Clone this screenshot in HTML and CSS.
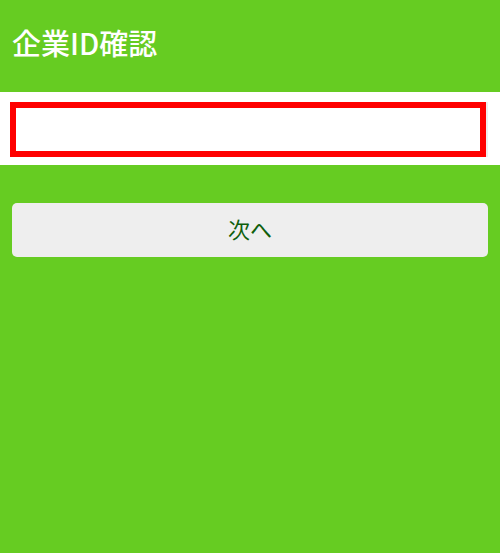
FILE: index.html
```html
<!DOCTYPE html>
<html lang="ja">
<head>
<meta charset="utf-8">
<title>企業ID確認</title>
<link rel="stylesheet" href="styles.css">
</head>
<body>
<header class="header">
  <h1 class="title">企業ID確認</h1>
</header>
<div class="field-band">
  <input class="field" type="text" aria-label="企業ID">
</div>
<div class="actions">
  <button class="next-btn" type="button">次へ</button>
</div>
</body>
</html>
```
FILE: styles.css
```css
html, body {
  margin: 0;
  padding: 0;
  height: 100%;
}
body {
  background: #66cc22;
  font-family: "Noto Sans CJK JP", "Noto Sans", sans-serif;
}
.header {
  height: 92px;
  box-sizing: border-box;
  padding: 0 12px;
  display: flex;
  align-items: center;
}
.title {
  margin: 0;
  color: #ffffff;
  font-size: 29px;
  font-weight: 500;
  line-height: 1;
  letter-spacing: 0;
  position: relative;
  top: -4px;
}
.field-band {
  background: #ffffff;
  height: 73px;
  box-sizing: border-box;
  padding: 10px 14px 0 10px;
}
.field {
  display: block;
  width: 100%;
  height: 55px;
  box-sizing: border-box;
  border: 6px solid #ff0000;
  background: #ffffff;
  margin: 0;
  padding: 0 8px;
  outline: none;
  box-shadow: 2px 0 0 #eeeeee;
  font-size: 18px;
}
.actions {
  padding: 38px 12px 0 12px;
}
.next-btn {
  display: block;
  width: 100%;
  height: 54px;
  border: none;
  border-radius: 5px;
  background: #eeeeee;
  color: #0f5e0c;
  font-family: "Noto Sans CJK JP", "Noto Sans", sans-serif;
  font-size: 22px;
  font-weight: 400;
  padding: 0 0 4px 0;
  cursor: pointer;
}
```
